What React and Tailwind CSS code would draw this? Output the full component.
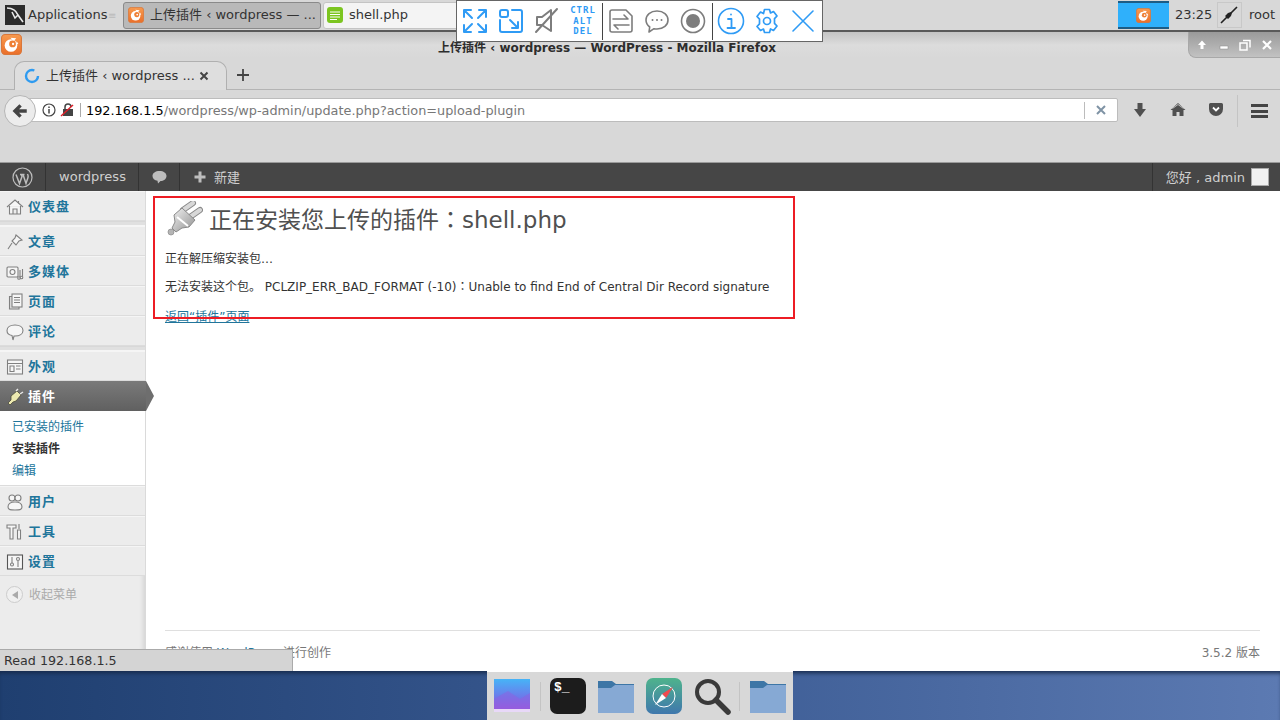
import React from 'react';

function FoxIcon({ size = 20 }) {
  return (
    <svg width={size} height={size} viewBox="0 0 20 20" className="shrink-0">
      <defs>
        <linearGradient id="foxBg" x1="0" y1="0" x2="0" y2="1">
          <stop offset="0" stopColor="#f79a4f" />
          <stop offset="1" stopColor="#ea6f2a" />
        </linearGradient>
      </defs>
      <rect x="0.5" y="0.5" width="19" height="19" rx="3.5" fill="url(#foxBg)" stroke="#d9773a" />
      <circle cx="9.500" cy="11" r="6" fill="#fff" />
      <path d="M9 3.500l5.500.5L12 7z" fill="#fff" />
      <circle cx="11" cy="9.500" r="3.200" fill="#ee7f35" />
      <circle cx="11.500" cy="9.500" r="1.100" fill="#fff" />
      <path d="M15 7l1.500 2.500-2 .5z" fill="#fff" />
    </svg>
  );
}

function BlueIcon({ children }) {
  return (
    <svg width="28" height="28" viewBox="0 0 28 28" fill="none" stroke="#2f9bf5" strokeWidth="2" strokeLinecap="round" strokeLinejoin="round">
      {children}
    </svg>
  );
}

function GreyIcon({ children }) {
  return (
    <svg width="28" height="28" viewBox="0 0 28 28" fill="none" stroke="#7d7d7d" strokeWidth="2" strokeLinecap="round" strokeLinejoin="round">
      {children}
    </svg>
  );
}

function RemoteToolbar() {
  return (
    <div className="absolute left-[456px] top-0 w-[367px] h-[42px] bg-white border border-[#666] flex items-center pl-[4px]">
      <div className="flex items-center gap-[8px]">
        <BlueIcon>
          <path d="M3 10V3h7M3 3l8 8M18 3h7v7M25 3l-8 8M3 18v7h7M3 25l8-8M18 25h7v-7M25 25l-8-8" />
        </BlueIcon>
        <BlueIcon>
          <path d="M15 3h8a2 2 0 0 1 2 2v18a2 2 0 0 1-2 2H5a2 2 0 0 1-2-2V13" />
          <rect x="3" y="3" width="8" height="7" rx="2" />
          <path d="M13 13l8 8M21 15v6h-6" />
        </BlueIcon>
        <GreyIcon>
          <path d="M4 10h5l9-7v21l-9-6H4zM24 2L3 25" />
        </GreyIcon>
        <div className="w-[28px] flex flex-col items-center font-['DejaVu_Sans_Mono',monospace] font-bold text-[9px] leading-[10.5px] tracking-[1px] text-[#2f9bf5]">
          <span>CTRL</span>
          <span>ALT</span>
          <span>DEL</span>
        </div>
      </div>
      <div className="w-px h-[37px] bg-[#444] ml-[5px]" />
      <div className="flex items-center gap-[8px] ml-[4px]">
        <GreyIcon>
          <path d="M3 5a2 2 0 0 1 2-2h14l6 6v14a2 2 0 0 1-2 2H5a2 2 0 0 1-2-2z" strokeWidth="1.6" />
          <path d="M6 12h15l-4-4M22 18H7l4 4" strokeWidth="1.6" />
        </GreyIcon>
        <GreyIcon>
          <path d="M14 4c6.500 0 11 3.800 11 9s-4.500 9-11 9c-1 0-2-.1-3-.3L6 25l.7-5C4.400 18.300 3 15.800 3 13c0-5.200 4.500-9 11-9z" strokeWidth="1.6" />
          <path d="M9.500 13h.01M14 13h.01M18.500 13h.01" />
        </GreyIcon>
        <GreyIcon>
          <circle cx="14" cy="14" r="11.500" strokeWidth="1.6" />
          <circle cx="14" cy="14" r="7" fill="#7d7d7d" stroke="none" />
        </GreyIcon>
      </div>
      <div className="w-px h-[37px] bg-[#444] ml-[5px]" />
      <div className="flex items-center gap-[8px] ml-[4px]">
        <BlueIcon>
          <circle cx="14" cy="14" r="12.500" strokeWidth="1.6" />
          <path d="M14 7.500h.01M11 12h3.500v9M10.500 21h7.500" strokeWidth="1.8" />
        </BlueIcon>
        <BlueIcon>
          <path d="M11.500 2.500h5l1 3.500 3-1.500 3.500 4.500-2.500 2.700v4.600l2.500 2.700-3.500 4.500-3-1.500-1 3.500h-5l-1-3.500-3 1.500L4 19.500l2.500-2.700v-4.600L4 9.500 7.500 5l3 1.500z" strokeWidth="1.7" />
          <circle cx="14" cy="14" r="3.500" strokeWidth="1.7" />
        </BlueIcon>
        <BlueIcon>
          <path d="M4 4l20 20M24 4L4 24" strokeWidth="1.600" />
        </BlueIcon>
      </div>
    </div>
  );
}

function TopPanel() {
  return (
    <div className="h-[32px] bg-[#d8d8d8] border-b-2 border-[#5a5a5a] flex items-center text-[13px] text-[#333] shrink-0">
      <svg width="20" height="20" viewBox="0 0 20 20" className="ml-[5px] shrink-0">
        <rect width="20" height="20" fill="#2b2b2b" />
        <path d="M2 3c5 0 9 2 11 7l5 7M13 10l-3 3-3-6" fill="none" stroke="#e8e8e8" strokeWidth="1.600" />
      </svg>
      <span className="ml-[3px] w-[80px]">Applications</span>
      <span className="w-[15px] text-[#bbb] text-[10px]">≡</span>
      <div className="w-[198px] h-[27px] bg-[#b9b9b9] border border-[#8a8a8a] rounded-[3px] flex items-center pl-[4px] gap-[6px] overflow-hidden">
        <FoxIcon size={16} />
        <span className="whitespace-nowrap">上传插件 ‹ wordpress — ...</span>
      </div>
      <div className="w-[140px] h-[27px] ml-[2px] bg-[#f4f4f4] border border-[#c4c4c4] rounded-[3px] flex items-center pl-[3px] gap-[6px]">
        <svg width="16" height="16" viewBox="0 0 16 16" className="shrink-0">
          <rect width="16" height="16" rx="3" fill="#7cc520" />
          <path d="M3 5h10M3 7.500h10M3 10h10M3 12.500h7" stroke="#fff" strokeWidth="1" />
        </svg>
        <span>shell.php</span>
      </div>
      <div className="ml-auto flex items-center">
        <div className="w-[51px] h-[28px] bg-[#2fb0fb] border-y-2 border-[#1d5c85] flex items-center justify-center">
          <FoxIcon size={15} />
        </div>
        <span className="ml-[6px] w-[36px]">23:25</span>
        <div className="ml-[6px] w-[25px] h-[26px] border border-[#c8c8c8] flex items-center justify-center">
          <svg width="20" height="20" viewBox="0 0 20 20">
            <path d="M2 18l6-6M18 2l-6 6" stroke="#222" strokeWidth="1.600" />
            <path d="M6 11l3-3 3 3-3 3zM9 8l3-1 1 1-1 3z" fill="#222" />
          </svg>
        </div>
        <span className="ml-[7px] mr-[5px]">root</span>
      </div>
    </div>
  );
}

function WindowTitle() {
  return (
    <div className="h-[26px] bg-gradient-to-b from-[#c4c4c4] via-[#dcdcdc] to-[#d8d8d8] flex items-center relative shrink-0">
      <div className="ml-[1px] mt-[-2px]">
        <FoxIcon size={21} />
      </div>
      <div className="absolute left-0 right-[66px] top-[7px] text-center text-[12px] font-bold text-[#2d2d2d]">
        上传插件 ‹ wordpress — WordPress - Mozilla Firefox
      </div>
      <div className="absolute right-0 top-0 w-[92px] h-[26px] rounded-bl-[8px] bg-gradient-to-b from-[#9a9a9a] to-[#c2c2c2] border-l border-b border-[#a8a8a8] flex items-center justify-around px-[2px] text-white">
        <svg width="12" height="12" viewBox="0 0 12 12"><path d="M6 1.500L10 6H7.500v4h-3V6H2z" fill="#fff" /></svg>
        <svg width="12" height="12" viewBox="0 0 12 12"><rect x="2" y="7" width="8" height="3" fill="#fff" stroke="#888" strokeWidth=".5" /></svg>
        <svg width="12" height="12" viewBox="0 0 12 12" fill="none" stroke="#fff" strokeWidth="1.500"><rect x="1" y="4" width="7" height="7" /><path d="M4 1.500h7v7" /></svg>
        <svg width="12" height="12" viewBox="0 0 12 12"><path d="M2 2l8 8M10 2l-8 8" stroke="#fff" strokeWidth="2.200" /></svg>
      </div>
    </div>
  );
}

function TabBar() {
  return (
    <div className="h-[32px] flex items-end bg-[#d8d8d8] border-b border-[#b4b4b4] shrink-0">
      <div className="ml-[14px] w-[213px] h-[29px] mb-[-1px] bg-[#dedede] border border-b-0 border-[#b0b0b0] rounded-t-[10px] flex items-center pl-[9px] text-[13px] text-[#333]">
        <svg width="16" height="16" viewBox="0 0 16 16" className="shrink-0">
          <circle cx="8" cy="8" r="6" fill="none" stroke="#2f9bf0" strokeWidth="2.400" strokeDasharray="30 8" />
        </svg>
        <span className="ml-[6px] w-[153px] whitespace-nowrap">上传插件 ‹ wordpress ...</span>
        <svg width="10" height="10" viewBox="0 0 10 10"><path d="M1.500 1.500l7 7M8.500 1.500l-7 7" stroke="#444" strokeWidth="2" /></svg>
      </div>
      <svg width="14" height="14" viewBox="0 0 14 14" className="ml-[9px] mb-[7px]">
        <path d="M7 1v12M1 7h12" stroke="#444" strokeWidth="1.800" />
      </svg>
    </div>
  );
}

function UrlBar() {
  return (
    <div className="h-[73px] bg-[#d8d8d8] border-b border-[#9a9a9a] shrink-0 relative">
      <div className="absolute left-[15px] top-[8px] w-[1103px] h-[24px] bg-white border border-[#bcbcbc] rounded-[2px] flex items-center text-[12.85px]">
        <span className="ml-[70px] pt-[1px] text-black whitespace-nowrap">192.168.1.5</span>
        <span className="pt-[1px] text-[#777] whitespace-nowrap">/wordpress/wp-admin/update.php?action=upload-plugin</span>
        <div className="ml-auto w-px h-[17px] bg-[#bcbcbc]" />
        <svg width="10" height="10" viewBox="0 0 10 10" className="mx-[11px]">
          <path d="M1 1l8 8M9 1l-8 8" stroke="#7f93a5" strokeWidth="2" />
        </svg>
      </div>
      <div className="absolute left-[4px] top-[5px] w-[32px] h-[32px] rounded-full bg-[#ececec] border border-[#b5b5b5] flex items-center justify-center">
        <svg width="18" height="18" viewBox="0 0 16 16">
          <path d="M14 8H5M8.500 3L3.500 8l5 5" fill="none" stroke="#444" strokeWidth="3" />
        </svg>
      </div>
      <svg width="14" height="14" viewBox="0 0 14 14" className="absolute left-[42px] top-[13px]">
        <circle cx="7" cy="7" r="6" fill="none" stroke="#444" strokeWidth="1.200" />
        <path d="M7 6v4.500M7 3.500v1.500" stroke="#444" strokeWidth="1.500" />
      </svg>
      <svg width="14" height="14" viewBox="0 0 14 14" className="absolute left-[60px] top-[13px]">
        <rect x="3" y="6" width="10" height="7" fill="#444" />
        <path d="M5 6V4a3 3 0 0 1 6 0" fill="none" stroke="#444" strokeWidth="1.500" />
        <path d="M1 13L13 2" stroke="#e0202a" strokeWidth="1.500" />
      </svg>
      <div className="absolute left-[80px] top-[13px] w-px h-[14px] bg-[#aaa]" />
      <svg width="14" height="16" viewBox="0 0 14 16" className="absolute left-[1133px] top-[12px]">
        <path d="M4.500 1h5v6H13l-6 8-6-8h3.500z" fill="#505050" />
      </svg>
      <svg width="16" height="15" viewBox="0 0 16 15" className="absolute left-[1170px] top-[12px]">
        <path d="M8 1L.5 8h2v6h4v-4h3v4h4V8h2z" fill="#505050" />
        <path d="M2.500 6.500L8 2.500l5.500 4" fill="none" stroke="#d8d8d8" strokeWidth=".8" />
      </svg>
      <svg width="16" height="15" viewBox="0 0 16 15" className="absolute left-[1208px] top-[12px]">
        <path d="M1 2.500a1.500 1.500 0 0 1 1.500-1.500h11A1.500 1.500 0 0 1 15 2.500V7a7 7 0 0 1-14 0z" fill="#505050" />
        <path d="M5 5.500l3 3 3-3" fill="none" stroke="#fff" strokeWidth="1.800" />
      </svg>
      <div className="absolute left-[1237px] top-[5px] w-px h-[32px] bg-[#c4c4c4]" />
      <div className="absolute left-[1251px] top-[14px] w-[17px] flex flex-col gap-[2.500px]">
        <div className="h-[3px] bg-[#444]" />
        <div className="h-[3px] bg-[#444]" />
        <div className="h-[3px] bg-[#444]" />
      </div>
    </div>
  );
}

function AdminBar() {
  return (
    <div className="h-[28px] bg-[#464646] flex items-center text-[13px] text-[#cfcfcf] shrink-0">
      <div className="w-[46px] h-full flex items-center justify-center border-r border-[#333]">
        <svg width="21" height="21" viewBox="0 0 21 21" fill="none" stroke="#bdbdbd">
          <circle cx="10.500" cy="10.500" r="9.500" strokeWidth="1.200" />
          <path d="M4 7.500l3.500 9 2.500-7-1-2.500M8 7.500h4.500M11 7.500l3 9 2-6c.5-1.500 0-2.500-.5-3.500" strokeWidth="1.500" />
        </svg>
      </div>
      <div className="w-[93px] h-full flex items-center justify-center border-r border-[#333] pl-[1px]">wordpress</div>
      <div className="w-[41px] h-full flex items-center justify-center border-r border-[#333]">
        <svg width="15" height="14" viewBox="0 0 15 14">
          <path d="M7.500 1C11.500 1 14.500 3 14.500 6S11.500 11 8.500 11L6 13.500 5.500 10.800C2.500 10.300.5 8.500.5 6 .5 3 3.500 1 7.500 1z" fill="#bdbdbd" />
        </svg>
      </div>
      <svg width="12" height="12" viewBox="0 0 12 12" className="ml-[14px]">
        <path d="M6 0.500v11M0.500 6h11" stroke="#bdbdbd" strokeWidth="3" />
      </svg>
      <span className="ml-[8px] pt-[1px]">新建</span>
      <div className="ml-auto h-full border-l border-[#333] flex items-center pl-[13px] pr-[11px] gap-[6px]">
        <span className="pt-[1px]">您好 , admin</span>
        <div className="w-[18px] h-[18px] bg-[#f1f1f1] border border-[#aaa]" />
      </div>
    </div>
  );
}

const iconProps = { width: 18, height: 18, viewBox: '0 0 18 18', fill: '#f6f6f6', stroke: '#808080', strokeWidth: 1.1 };

const icons = {
  dash: <svg {...iconProps}><path d="M1 9l8-7 8 7M3.500 8v8h11V8M7 16v-5h4v5" /><path d="M12.500 3v2.500" /></svg>,
  post: <svg {...iconProps}><path d="M10 2l6 5-3 1-3 4-4-4 3-3zM6 10l-4 6" /></svg>,
  media: <svg {...iconProps}><rect x="1" y="4" width="11" height="10" rx="1" /><circle cx="6.500" cy="9" r="2.500" /><path d="M14 7v8M16.500 6v8" /><circle cx="13" cy="15" r="1.300" /><circle cx="15.500" cy="14.500" r="1.300" /></svg>,
  page: <svg {...iconProps}><path d="M6 3.500H3.500V16H13v-2" fill="#ddd" /><rect x="6" y="1" width="10" height="13" /><path d="M8 4.500h6M8 7h6M8 9.500h6" /></svg>,
  comment: <svg {...iconProps}><path d="M9 2c4.500 0 8 2 8 5.500S13.500 13 9 13l-1 0-1 4-1-4.500C3 12 1 10 1 7.500 1 4 4.500 2 9 2z" /></svg>,
  look: <svg {...iconProps}><rect x="1.500" y="2" width="15" height="14" /><path d="M1.500 5.500h15M4 8h4v5.500H4zM10 8h4.500M10 11h4.500" /></svg>,
  plugin: <svg width="18" height="18" viewBox="0 0 18 18"><path d="M5 8l6-5 4 4-5 6-3 1-3 3-2-2 3-3z" fill="#ece9b0" stroke="#4a4a3a" strokeWidth=".8" /><path d="M10 3l2-2M14 6l3-2" stroke="#e8e8e8" strokeWidth="1.500" /></svg>,
  user: <svg {...iconProps}><circle cx="6" cy="5" r="3" /><circle cx="12" cy="5" r="3" /><path d="M2 14c0-3 2-5 7-5s7 2 7 5-3 3-7 3-7 0-7-3z" /></svg>,
  tool: <svg {...iconProps}><path d="M1 2h9v3H7v11H4V5H1zM13 1v5M11.500 7h3v9h-3z" /></svg>,
  set: <svg {...iconProps}><rect x="1.500" y="2" width="15" height="14" stroke="#555" /><circle cx="6" cy="11.500" r="1.500" /><path d="M6 4v6" /><circle cx="12" cy="6" r="1.500" /><path d="M12 8v6" /></svg>,
};

function MenuItem({ icon, label }) {
  return (
    <div className="flex items-center pl-[6px] gap-[4px] bg-[#ececec] border-b border-[#dcdcdc] border-t border-t-[#f5f5f5] h-[30px] pt-[2px]">
      <div className="w-[18px] flex justify-center">{icons[icon]}</div>
      <span className="text-[13px] tracking-[1px] font-bold text-[#21759b]">{label}</span>
    </div>
  );
}

function MenuSep() {
  return <div className="h-[5px] bg-[#e0e0e0] border-t border-[#d8d8d8] border-b border-b-[#f5f5f5]" />;
}

function Sidebar() {
  return (
    <div className="w-[146px] bg-[#ececec] shrink-0 border-r border-[#dadada] relative shadow-[inset_-5px_0_4px_-3px_#d4d4d4]">
      <MenuItem icon="dash" label="仪表盘" />
      <MenuSep />
      <MenuItem icon="post" label="文章" />
      <MenuItem icon="media" label="多媒体" />
      <MenuItem icon="page" label="页面" />
      <MenuItem icon="comment" label="评论" />
      <MenuSep />
      <MenuItem icon="look" label="外观" />
      <div className="h-[30px] w-[146px] bg-gradient-to-b from-[#7a7a7a] to-[#606060] flex items-center pl-[6px] pt-[1px] gap-[4px] relative">
        <div className="w-[18px] flex justify-center">{icons.plugin}</div>
        <span className="text-[13px] tracking-[1px] font-bold text-white">插件</span>
        <div className="absolute left-[146px] top-0 w-0 h-0 border-y-[15px] border-y-transparent border-l-[8px] border-l-[#6e6e6e]" />
      </div>
      <div className="h-[75px] bg-white border-b border-[#dcdcdc] pl-[12px] pt-[5px] text-[12px] flex flex-col">
        <span className="h-[22px] leading-[22px] text-[#21759b]">已安装的插件</span>
        <span className="h-[22px] leading-[22px] font-bold text-[#333]">安装插件</span>
        <span className="h-[22px] leading-[22px] text-[#21759b]">编辑</span>
      </div>
      <MenuItem icon="user" label="用户" />
      <MenuItem icon="tool" label="工具" />
      <MenuItem icon="set" label="设置" />
      <div className="flex items-center pl-[6px] h-[36px] pt-[1px] text-[12px] text-[#aaa]">
        <div className="w-[17px] h-[17px] rounded-full border border-[#ccc] bg-[#f0f0f0] flex items-center justify-center">
          <div className="w-0 h-0 border-y-[4px] border-y-transparent border-r-[6px] border-r-[#aaa]" />
        </div>
        <span className="ml-[6px]">收起菜单</span>
      </div>
    </div>
  );
}

function Content() {
  return (
    <div className="flex-1 bg-white flex flex-col pl-[19px] pr-[20px] text-[12px] text-[#333]">
      <div className="flex items-center h-[56px]">
        <svg width="36" height="36" viewBox="0 0 36 36" className="ml-[2px] shrink-0">
          <defs>
            <linearGradient id="plugBody" x1="0" y1="0" x2="1" y2="1">
              <stop offset="0" stopColor="#f2f2f2" />
              <stop offset="1" stopColor="#8f8f8f" />
            </linearGradient>
          </defs>
          <path d="M16 9L26 2M23 16L33 9" stroke="#8a8a8a" strokeWidth="6" strokeLinecap="round" />
          <path d="M16 9L26 2M23 16L33 9" stroke="#d8d8d8" strokeWidth="4" strokeLinecap="round" />
          <path d="M7 14L15 7 28 19 22 26 15 27 9 31 5 27 8 21Z" fill="url(#plugBody)" stroke="#8a8a8a" strokeWidth="1" />
          <path d="M10 16l11 9" stroke="#fff" strokeWidth="2" />
          <circle cx="4" cy="31" r="3" fill="#b5b5b5" stroke="#8a8a8a" strokeWidth=".7" />
        </svg>
        <h2 className="ml-[6px] text-[23px] font-normal text-[#505050] whitespace-nowrap">正在安装您上传的插件<span className="font-['Noto_Sans_CJK_TC',sans-serif]">：</span>shell.php</h2>
      </div>
      <p className="mt-[3px] leading-[18px]">正在解压缩安装包…</p>
      <p className="mt-[9px] leading-[18px]">无法安装这个包。 PCLZIP_ERR_BAD_FORMAT (-10)<span className="font-['Noto_Sans_CJK_TC',sans-serif]">：</span>Unable to find End of Central Dir Record signature</p>
      <p className="mt-[12px] leading-[18px]"><span className="text-[#21759b] underline">返回“插件”页面</span></p>
      <div className="mt-auto h-[41px] border-t border-[#dfdfdf] flex items-center justify-between text-[#777] pt-[3px]">
        <span>感谢使用 <span className="text-[#21759b]">WordPress</span> 进行创作</span>
        <span>3.5.2 版本</span>
      </div>
    </div>
  );
}

function Dock() {
  return (
    <div className="h-[49px] bg-gradient-to-r from-[#1f3f70] via-[#3a5a92] to-[#5c7ab2] shadow-[inset_0_4px_4px_-2px_#16294a] flex justify-center shrink-0">
      <div className="w-[306px] h-full bg-[#d8d8d8] border-t border-white flex items-center pl-[7px]">
        <svg width="36" height="35" viewBox="0 0 36 35" className="shrink-0">
          <defs>
            <linearGradient id="wall" x1="0" y1="0" x2="0" y2="1">
              <stop offset="0" stopColor="#46b4f7" />
              <stop offset=".55" stopColor="#6d79ea" />
              <stop offset="1" stopColor="#a84fd8" />
            </linearGradient>
          </defs>
          <rect width="36" height="33" fill="url(#wall)" />
          <path d="M0 20L14 12l12 8 10-6v19H0z" fill="#8f5fe0" opacity=".5" />
          <rect y="30" width="36" height="3" fill="#e8d8f8" />
        </svg>
        <div className="w-px h-[29px] bg-[#c4c4c4] ml-[10px]" />
        <div className="w-[36px] h-[36px] ml-[9px] rounded-[7px] bg-[#1c1c1c] text-white font-['Liberation_Mono',monospace] font-bold text-[13px] pl-[4px] pt-[1px] leading-[18px]">$_</div>
        <Folder className="ml-[12px]" />
        <svg width="36" height="36" viewBox="0 0 36 36" className="ml-[12px] shrink-0">
          <defs>
            <linearGradient id="compass" x1="0" y1="0" x2="0" y2="1">
              <stop offset="0" stopColor="#4fb38c" />
              <stop offset="1" stopColor="#3f77ad" />
            </linearGradient>
          </defs>
          <rect width="36" height="36" rx="7" fill="url(#compass)" />
          <circle cx="18" cy="18" r="11" fill="none" stroke="#fff" strokeWidth="1" />
          <path d="M27 9l-11 7 4 4z" fill="#ef4a4f" />
          <path d="M9 27l7-11 4 4z" fill="#fff" />
        </svg>
        <svg width="38" height="38" viewBox="0 0 38 38" className="ml-[11px] shrink-0">
          <circle cx="15" cy="15" r="11" fill="none" stroke="#3a3a3a" strokeWidth="4" />
          <path d="M23 23l12 12" stroke="#3a3a3a" strokeWidth="5.500" strokeLinecap="round" />
        </svg>
        <div className="w-px h-[29px] bg-[#c4c4c4] ml-[8px]" />
        <Folder className="ml-[10px]" />
      </div>
    </div>
  );
}

function Folder({ className }) {
  return (
    <svg width="36" height="34" viewBox="0 0 36 34" className={`shrink-0 ${className}`}>
      <path d="M0 2h14l4 3h18v29H0z" fill="#3d76a6" />
      <path d="M0 9h13l4-3h19v28H0z" fill="#86a9d4" />
    </svg>
  );
}

export default function App() {
  return (
    <div className="w-[1280px] h-[720px] relative overflow-hidden flex flex-col bg-[#d8d8d8] font-['DejaVu_Sans','Noto_Sans_CJK_SC',sans-serif]">
      <TopPanel />
      <WindowTitle />
      <TabBar />
      <UrlBar />
      <AdminBar />
      <div className="flex-1 flex min-h-0">
        <Sidebar />
        <Content />
      </div>
      <Dock />

      <RemoteToolbar />
      {/* red annotation box drawn over the page */}
      <div className="absolute left-[153px] top-[196px] w-[642px] h-[123px] border-2 border-[#ed1c24]" />
      <div className="absolute left-0 top-[649px] w-[293px] h-[22px] bg-[#d4d4d4] border-t border-r border-[#aaa] flex items-center pl-[4px] text-[12.7px] text-[#333]">
        Read 192.168.1.5
      </div>
    </div>
  );
}
